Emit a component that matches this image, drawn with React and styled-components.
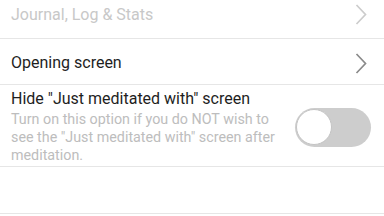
import React from "react";
import styled, { createGlobalStyle } from "styled-components";

const Global = createGlobalStyle`
  html, body { margin: 0; padding: 0; background: #fff; }
  body { font-family: Roboto, "Noto Sans", sans-serif; -webkit-font-smoothing: antialiased; }
`;

const List = styled.div`
  display: flex;
  flex-direction: column;
  width: 384px;
`;

const Row = styled.div`
  display: flex;
  align-items: center;
  justify-content: space-between;
  box-sizing: border-box;
  height: ${(p) => p.$h}px;
  padding: ${(p) => p.$pt || 0}px 17px ${(p) => p.$pb || 0}px 11px;
  border-bottom: 1.5px solid #e6e6e6;
`;

const TextCol = styled.div`
  display: flex;
  flex-direction: column;
`;

const Title = styled.div`
  font-size: 16px;
  color: ${(p) => (p.$dim ? "#c8c8c8" : "#1e1e1e")};
  line-height: 20px;
`;

const Sub = styled.div`
  font-size: 14.3px;
  color: #bdbdbd;
  line-height: 17.7px;
  width: 275px;
  margin-top: 2px;
`;

const Chevron = ({ color }) => (
  <svg width="12" height="21" viewBox="0 0 12 21">
    <path d="M1.5 1 L10.5 10.5 L1.5 20" fill="none" stroke={color} strokeWidth="1.7" />
  </svg>
);

const Track = styled.div`
  width: 76px;
  height: 39px;
  border-radius: 20px;
  background: #cdcdcd;
  display: flex;
  align-items: center;
  box-sizing: border-box;
  padding: 1px;
  margin-right: -4px;
`;

const Knob = styled.div`
  width: 36px;
  height: 36px;
  border-radius: 50%;
  background: #fff;
  box-sizing: border-box;
  border: 1.5px solid #c4c4c4;
`;

export default function App() {
  return (
    <>
      <Global />
      <List>
        <Row $h={39} $pb={9}>
          <Title $dim>Journal, Log &amp; Stats</Title>
          <Chevron color="#cccccc" />
        </Row>
        <Row $h={46} $pt={3}>
          <Title>Opening screen</Title>
          <Chevron color="#8a8a8a" />
        </Row>
        <Row $h={82} $pt={3}>
          <TextCol>
            <Title>Hide "Just meditated with" screen</Title>
            <Sub>Turn on this option if you do NOT wish to see the "Just meditated with" screen after meditation.</Sub>
          </TextCol>
          <Track>
            <Knob />
          </Track>
        </Row>
        <Row $h={47} />
      </List>
    </>
  );
}
